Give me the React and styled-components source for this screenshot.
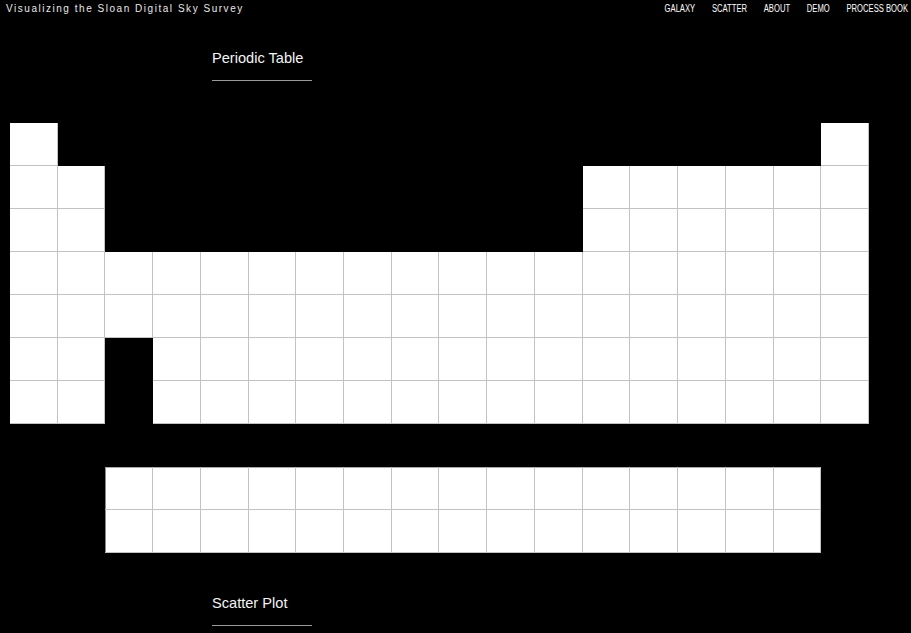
import React from 'react';
import styled, { createGlobalStyle } from 'styled-components';

const GlobalStyle = createGlobalStyle`
  html, body {
    margin: 0;
    padding: 0;
    background: #000;
  }
  body {
    font-family: 'Liberation Sans', Arial, sans-serif;
    color: #fff;
  }
`;

const navItems = ['GALAXY', 'SCATTER', 'ABOUT', 'DEMO', 'PROCESS BOOK'];

// which columns hold an element, per period row (1-based columns)
const span = (a, b) => Array.from({ length: b - a + 1 }, (_, i) => a + i);
const layout = [
  [1, 18],
  [...span(1, 2), ...span(13, 18)],
  [...span(1, 2), ...span(13, 18)],
  span(1, 18),
  span(1, 18),
  [...span(1, 2), ...span(4, 18)],
  [...span(1, 2), ...span(4, 18)],
  [],
  span(3, 17),
  span(3, 17),
];

const PeriodicTable = () => {
  const cells = [];
  layout.forEach((cols, r) => {
    for (let c = 1; c <= 18; c++) {
      const filled = cols.includes(c);
      const series = r >= 8;
      cells.push(
        <Cell
          key={`${r}-${c}`}
          $filled={filled}
          $top={filled && series && r === 8}
          $left={filled && series && c === 3}
        />
      );
    }
  });
  return <Grid>{cells}</Grid>;
};

const App = () => {
  return (
    <Page>
      <GlobalStyle />
      <Header>
        <Title>Visualizing the Sloan Digital Sky Survey</Title>
        <Nav>
          {navItems.map((item) => (
            <NavLink key={item}>{item}</NavLink>
          ))}
        </Nav>
      </Header>
      <Section>
        <Heading>Periodic Table</Heading>
        <PeriodicTable />
      </Section>
      <Section $gap={42}>
        <Heading>Scatter Plot</Heading>
      </Section>
    </Page>
  );
};
export default App;

const Page = styled.div`
  width: 911px;
  height: 633px;
  background: #000;
  overflow: hidden;
`;
const Header = styled.header`
  height: 18px;
  box-sizing: border-box;
  padding: 3px 3px 0 6px;
  display: flex;
  justify-content: space-between;
  align-items: flex-start;
`;
const Title = styled.div`
  font-size: 10px;
  line-height: 12px;
  letter-spacing: 1.53px;
  color: #e8e8e8;
`;
const Nav = styled.nav`
  display: flex;
  gap: 22px;
  transform: scaleX(0.763);
  transform-origin: right center;
`;
const NavLink = styled.span`
  font-size: 10px;
  line-height: 12px;
  color: #fff;
  white-space: nowrap;
  cursor: pointer;
`;
const Section = styled.section`
  padding-top: ${(props) => props.$gap ?? 32}px;
`;
const Heading = styled.h2`
  margin: 0 0 42px 212px;
  width: 100px;
  padding-bottom: 14px;
  border-bottom: 1px solid #9a9a9a;
  font-size: 14.6px;
  line-height: 16px;
  font-weight: normal;
  white-space: nowrap;
  color: #f4f4f4;
`;
const Grid = styled.div`
  margin-left: 10px;
  width: 859px;
  display: grid;
  grid-template-columns: repeat(18, 1fr);
  grid-auto-rows: 43px;
`;
const Cell = styled.div`
  box-sizing: border-box;
  background: ${(props) => (props.$filled ? '#fff' : 'transparent')};
  box-shadow: ${(props) =>
    props.$filled
      ? [
          'inset -1px -1px 0 #c2c2c2',
          props.$top ? 'inset 0 1px 0 #a8a8a8' : null,
          props.$left ? 'inset 1px 0 0 #8a8a8a' : null,
        ]
          .filter(Boolean)
          .join(', ')
      : 'none'};
`;
